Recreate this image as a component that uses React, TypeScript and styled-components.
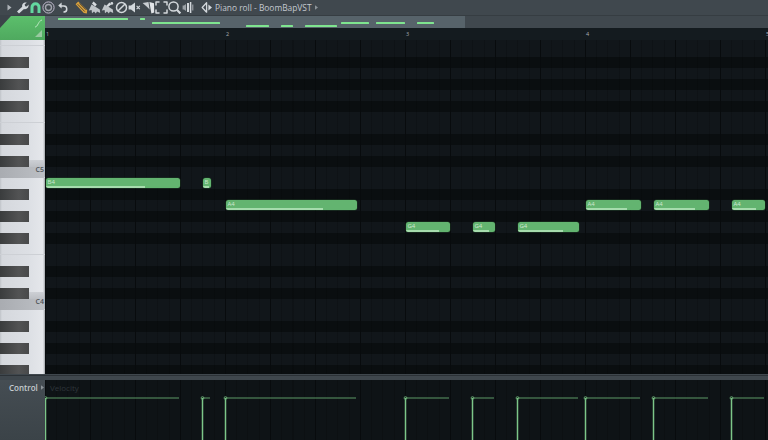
import React from "react";
import styled, { createGlobalStyle } from "styled-components";

const Global = createGlobalStyle`
  html, body { margin: 0; padding: 0; background: #3f474d; }
  * { box-sizing: border-box; }
`;

const Root = styled.div`
  width: 768px;
  height: 440px;
  display: flex;
  flex-direction: column;
  overflow: hidden;
  font-family: "Open Sans", "Liberation Sans", sans-serif;
  background: #3f474d;
`;

const Toolbar = styled.div`
  height: 15px;
  flex: none;
  display: flex;
  align-items: center;
  padding-left: 2.5px;
  background: #40484e;
`;

const Slot = styled.span<{ $gap?: number }>`
  width: 13px;
  height: 13px;
  flex: none;
  margin-left: ${(p) => p.$gap ?? 0}px;
  display: flex;
  align-items: center;
  justify-content: center;
`;

const Title = styled.span`
  margin-left: 1.5px;
  font-size: 8.4px;
  line-height: 15px;
  color: #c3c9ce;
  white-space: nowrap;
`;

const TitleArrow = styled.svg`
  margin-left: 3px;
  width: 3px;
  height: 5px;
`;

const Header = styled.div`
  height: 25px;
  flex: none;
  display: grid;
  grid-template-columns: 45px 1fr;
  background: #3b4349;
`;

const Corner = styled.div`
  position: relative;
  background: linear-gradient(180deg, #5cc06c 0%, #4fa95f 100%);
  clip-path: polygon(11px 1px, 100% 1px, 100% 100%, 0 100%, 0 13px);
`;

const CornerGlyph = styled.svg<{ $top: number }>`
  position: absolute;
  right: 2px;
  top: ${(p) => p.$top}px;
  width: 9px;
  height: 9px;
`;

const HeaderRight = styled.div`
  display: flex;
  flex-direction: column;
  min-width: 0;
`;

const OverviewRow = styled.div`
  height: 13px;
  flex: none;
  display: flex;
  background: #40484e;
  border-top: 1px solid #363d42;
`;

const Overview = styled.svg`
  width: 420px;
  height: 12px;
  flex: none;
  background: #57636a;
  display: block;
`;

const Ruler = styled.div`
  height: 12px;
  flex: none;
  display: flex;
  background: #141b1f;
  overflow: hidden;
`;

const BarNumber = styled.span`
  width: 180px;
  flex: none;
  padding-left: 1px;
  font-size: 5.5px;
  line-height: 12px;
  color: #a8aeb3;
`;

const Main = styled.div`
  height: 335px;
  flex: none;
  display: grid;
  grid-template-columns: 45px 1fr;
`;

const Keys = styled.div`
  overflow: hidden;
  height: 334px;
  display: flex;
  flex-direction: column;
  background: #e0e3e8;
`;

const KeyRow = styled.div<{ $seam: boolean }>`
  height: 11px;
  flex: none;
  position: relative;
  background: linear-gradient(90deg, #bfc3c8 0, #d5d8dd 2px, #dcdfe4 28px, #e5e7eb 43px, #9fa3a8 45px);
  border-bottom: 1px solid ${(p) => (p.$seam ? "#cdd0d5" : "transparent")};
  &:first-child {
    margin-top: -5px;
  }
`;

const BlackKey = styled.span`
  position: absolute;
  left: 0;
  top: 0;
  width: 29px;
  height: 11px;
  background: linear-gradient(90deg, #3a3c3d 0, #525354 65%, #48494a 100%);
`;

const OctaveStrip = styled.span`
  position: absolute;
  left: 0;
  right: 1px;
  top: 0;
  height: 11px;
  background: linear-gradient(90deg, #a9acb1 0, #bcbfc4 100%);
`;

const OctaveCap = styled.span`
  position: absolute;
  left: 29px;
  right: 1px;
  top: -7px;
  height: 7px;
  background: linear-gradient(180deg, #cdd0d5 0, #bcbfc4 100%);
`;

const KeyLabel = styled.span`
  position: absolute;
  right: 1px;
  top: -3px;
  font-size: 7px;
  line-height: 11px;
  font-weight: 600;
  color: #4d5257;
`;

const rowBands = `linear-gradient(180deg,
  #11161a 0 22px, #0a0e10 22px 33px, #11161a 33px 44px,
  #0a0e10 44px 55px, #11161a 55px 66px, #0a0e10 66px 77px, #11161a 77px 99px,
  #0a0e10 99px 110px, #11161a 110px 121px, #0a0e10 121px 132px)`;

const gridLines = `
  repeating-linear-gradient(90deg, #080b0d 0 1px, transparent 1px 45px),
  repeating-linear-gradient(90deg, rgba(0,0,0,.16) 0 1px, transparent 1px 11.25px)`;

const Grid = styled.div`
  position: relative;
  overflow: hidden;
  height: 334px;
  background-image: ${gridLines}, ${rowBands};
  background-size: auto, auto, 100% 132px;
  background-position: 0 0, 0 0, 0 127px;
`;

const Note = styled.div<{ $x: number; $y: number; $w: number }>`
  position: absolute;
  left: ${(p) => p.$x}px;
  top: ${(p) => p.$y}px;
  width: ${(p) => p.$w}px;
  height: 10px;
  border-radius: 2.5px;
  background: #63b470;
  box-shadow: 0 0 0 0.5px #1c3a22;
  overflow: hidden;
`;

const NoteLabel = styled.span`
  position: absolute;
  left: 1.5px;
  top: -0.5px;
  font-size: 6px;
  line-height: 8px;
  color: #cfe8d3;
`;

const NoteVelocity = styled.span<{ $w: number }>`
  position: absolute;
  left: 0;
  bottom: 0.5px;
  height: 1.5px;
  width: ${(p) => p.$w}px;
  background: #a6dcad;
`;

const Divider = styled.div`
  height: 5px;
  flex: none;
  background: #3f474d;
  border-top: 1px solid #2c3237;
`;

const Control = styled.div`
  flex: 1;
  display: grid;
  grid-template-columns: 45px 1fr;
  min-height: 0;
`;

const ControlSide = styled.div`
  display: flex;
  align-items: flex-start;
  padding: 2px 0 0 9px;
  background: linear-gradient(180deg, #454d53 0, #3b4348 100%);
`;

const ControlLabel = styled.span`
  font-size: 8px;
  line-height: 11px;
  font-weight: 600;
  color: #c6ccd0;
`;

const ControlArrow = styled.svg`
  margin: 3px 0 0 3px;
  width: 3px;
  height: 5px;
`;

const ControlPane = styled.div`
  position: relative;
  overflow: hidden;
  background-image: ${gridLines};
  background-color: #0e1316;
`;

const VelocityName = styled.span`
  position: absolute;
  left: 5px;
  top: 2px;
  font-size: 8px;
  line-height: 11px;
  color: #2f363b;
`;

const VelocityChart = styled.svg`
  display: block;
  width: 723px;
  height: 60px;
`;

const stroke = { fill: "none", stroke: "#d3d8dc", strokeWidth: 1.5, strokeLinecap: "round" as const, strokeLinejoin: "round" as const };

const Icons = [
  <svg width="5" height="7" viewBox="0 0 5 7" key="a"><path d="M0.5 0.5 4.5 3.5 0.5 6.5Z" fill="#aeb4b9" /></svg>,
  <svg width="13" height="13" viewBox="0 0 13 13" key="b"><path d="M1 10.5 6.2 5.8C5.6 3.4 7.6 1 10.8 1.6L8.6 3.6 9.2 5.2 10.8 5.6 12.6 3.6C13 6.8 10.4 8.8 8 8L3 12.6Z" fill="#d3d8dc" /></svg>,
  <svg width="13" height="13" viewBox="0 0 13 13" key="c"><path d="M3 12V6.3A3.5 3.5 0 0 1 10 6.3V12" fill="none" stroke="#63d7a0" strokeWidth="3" /></svg>,
  <svg width="13" height="13" viewBox="0 0 13 13" key="d"><circle cx="6.5" cy="6.5" r="5.6" fill="none" stroke="#c3bcd0" strokeWidth="1" /><circle cx="6.5" cy="6.5" r="3" fill="none" stroke="#a3a5ae" strokeWidth="1.4" /></svg>,
  <svg width="13" height="13" viewBox="0 0 13 13" key="e"><path d="M4.5 5H7.5A2.9 2.9 0 0 1 8 11" {...stroke} /><path d="M5.6 1.6 2.2 4.6 5.6 7.4Z" fill="#d3d8dc" /></svg>,
  <svg width="13" height="13" viewBox="0 0 13 13" key="f"><path d="M3.2 0.6 12.2 9.2 11.8 12.4 8.8 12 0.6 3.2Z" fill="#d9a13c" /><path d="M2.6 3.2 9.8 10.6M4.6 2.4 11 8.8" stroke="#4d4230" strokeWidth="0.9" /></svg>,
  <svg width="13" height="13" viewBox="0 0 13 13" key="g"><path d="M5.6 0.6 8.8 3.6 7.2 5.6 4 2.6Z" fill="#d8dce0" /><path d="M3.6 3.6 7.4 5.8 11.8 8.4 12.2 12 9 10.4 7.8 12.4 6 10.4 4 12.2 3.6 9 0.8 9.6Z" fill="#bfc4c8" /></svg>,
  <svg width="13" height="13" viewBox="0 0 13 13" key="h"><path d="M8.4 1.6 10.2 3.4 6.4 6.6 5 5.2Z" fill="#d8dce0" /><path d="M3.6 3.6 7.4 5.8 11.8 8.4 12.2 12 9 10.4 7.8 12.4 6 10.4 4 12.2 3.6 9 0.8 9.6Z" fill="#bfc4c8" /><circle cx="10.8" cy="2.4" r="1.4" fill="#d3d8dc" /></svg>,
  <svg width="13" height="13" viewBox="0 0 13 13" key="i"><circle cx="6.5" cy="6.5" r="5" {...stroke} /><path d="M3.2 9.8 9.8 3.2" {...stroke} /></svg>,
  <svg width="13" height="13" viewBox="0 0 13 13" key="j"><path d="M0.6 4.4H3L7 1.4V11.6L3 8.6H0.6Z" fill="#d3d8dc" /><path d="M8.6 4.8 11.8 8.2M11.8 4.8 8.6 8.2" stroke="#d3d8dc" strokeWidth="1.1" /></svg>,
  <svg width="13" height="13" viewBox="0 0 13 13" key="k"><path d="M0.6 2 6.5 1 7.6 8.6 4.6 5.4Z" fill="#c9ced2" /><path d="M7.4 1 12 2.2 12.2 11.6 9.4 12.4 8.4 7Z" fill="#e1e4e7" /></svg>,
  <svg width="13" height="13" viewBox="0 0 13 13" key="l"><path d="M1 4V1H4M9 1H12V4M12 9V12H9M4 12H1V9" {...stroke} /></svg>,
  <svg width="13" height="13" viewBox="0 0 13 13" key="m"><circle cx="5.5" cy="5.5" r="4.6" {...stroke} /><path d="M8.8 8.8 12.4 12.4" fill="none" stroke="#d3d8dc" strokeWidth="2.2" /></svg>,
  <svg width="13" height="13" viewBox="0 0 13 13" key="n"><path d="M1.6 4.6H3L5 3V10L3 8.4H1.6Z" fill="#9aa0a5" /><path d="M7 2V11" stroke="#d3d8dc" strokeWidth="2" /><path d="M9.6 1V12" stroke="#d3d8dc" strokeWidth="1.5" /><path d="M11.8 3.5V9.5" stroke="#aab0b5" strokeWidth="1" /></svg>,
  <svg width="13" height="13" viewBox="0 0 13 13" key="o"><path d="M5.6 1.8V11.2L1.2 6.5Z" fill="none" stroke="#d3d8dc" strokeWidth="1.3" strokeLinejoin="round" /><path d="M7.4 3.6 11 6.5 7.4 9.4Z" fill="#d3d8dc" /></svg>,
];

const gaps = [0, 0, 0, 0, 1, 6, 0, 0, 1, 0, 1, 0, 0, 0, 7];

const previewBars = [
  { x: 13, y: 2, w: 70 },
  { x: 95, y: 2, w: 5 },
  { x: 107, y: 6, w: 68 },
  { x: 201, y: 9, w: 23 },
  { x: 236, y: 9, w: 12 },
  { x: 260, y: 9, w: 32 },
  { x: 296, y: 6, w: 28 },
  { x: 331, y: 6, w: 29 },
  { x: 372, y: 6, w: 17 },
];

const noteData = [
  { n: "B4", x: 1, y: 138, w: 134 },
  { n: "B", x: 158, y: 138, w: 8 },
  { n: "A4", x: 181, y: 160, w: 131 },
  { n: "G4", x: 361, y: 182, w: 44 },
  { n: "G4", x: 428, y: 182, w: 22 },
  { n: "G4", x: 473, y: 182, w: 61 },
  { n: "A4", x: 541, y: 160, w: 55 },
  { n: "A4", x: 609, y: 160, w: 55 },
  { n: "A4", x: 687, y: 160, w: 33 },
];

const names = ["C", "B", "A#", "A", "G#", "G", "F#", "F", "E", "D#", "D", "C#"];
const keyRows = Array.from({ length: 31 }, (_, i) => {
  const name = names[i % 12];
  const octave = 6 - Math.floor(i / 12);
  return { id: i, name, octave, black: name.includes("#"), isC: name === "C" && octave < 6 };
});

export default function App() {
  return (
    <Root>
      <Global />
      <Toolbar>
        {Icons.map((icon, i) => (
          <Slot key={i} $gap={gaps[i]}>{icon}</Slot>
        ))}
        <Title>Piano roll - BoomBapVST</Title>
        <TitleArrow viewBox="0 0 4 6"><path d="M0 0 4 3 0 6Z" fill="#8d9499" /></TitleArrow>
      </Toolbar>
      <Header>
        <Corner>
          <CornerGlyph $top={4} viewBox="0 0 9 9"><path d="M1 8C4 8 4 2 8 1" fill="none" stroke="#b9e6c0" strokeWidth="1" /></CornerGlyph>
          <CornerGlyph $top={14} viewBox="0 0 9 9"><path d="M1 8 8 1V8Z" fill="#98c9a0" /></CornerGlyph>
        </Corner>
        <HeaderRight>
          <OverviewRow>
            <Overview viewBox="0 0 420 12">
              {previewBars.map((b) => (
                <rect key={b.x} x={b.x} y={b.y} width={b.w} height={2} rx={0.5} fill="#7fe58f" />
              ))}
            </Overview>
          </OverviewRow>
          <Ruler>
            {[1, 2, 3, 4, 5].map((n) => (
              <BarNumber key={n}>{n}</BarNumber>
            ))}
          </Ruler>
        </HeaderRight>
      </Header>
      <Main>
        <Keys>
          {keyRows.map((k) => (
            <KeyRow key={k.id} $seam={k.name === "C" || k.name === "F"}>
              {k.isC && <OctaveStrip />}
              {k.isC && <OctaveCap />}
              {k.black && <BlackKey />}
              {k.isC && <KeyLabel>C{k.octave}</KeyLabel>}
            </KeyRow>
          ))}
        </Keys>
        <Grid>
          {noteData.map((n) => (
            <Note key={n.x} $x={n.x} $y={n.y} $w={n.w}>
              <NoteLabel>{n.n}</NoteLabel>
              <NoteVelocity $w={Math.round(n.w * 0.74)} />
            </Note>
          ))}
        </Grid>
      </Main>
      <Divider />
      <Control>
        <ControlSide>
          <ControlLabel>Control</ControlLabel>
          <ControlArrow viewBox="0 0 4 6"><path d="M0 0 4 3 0 6Z" fill="#8d9499" /></ControlArrow>
        </ControlSide>
        <ControlPane>
          <VelocityName>Velocity</VelocityName>
          <VelocityChart viewBox="0 0 723 60">
            {noteData.map((n) => (
              <g key={n.x}>
                <path d={`M${n.x - 0.5} 18H${n.x + n.w - 1}`} stroke="#5d9a67" strokeWidth="1" fill="none" />
                <path d={`M${n.x - 0.5} 18V60`} stroke="#7cc688" strokeWidth="1.5" fill="none" />
                <circle cx={n.x - 0.5} cy={18} r={1.4} fill="none" stroke="#6eb47a" strokeWidth="0.8" />
              </g>
            ))}
          </VelocityChart>
        </ControlPane>
      </Control>
    </Root>
  );
}
